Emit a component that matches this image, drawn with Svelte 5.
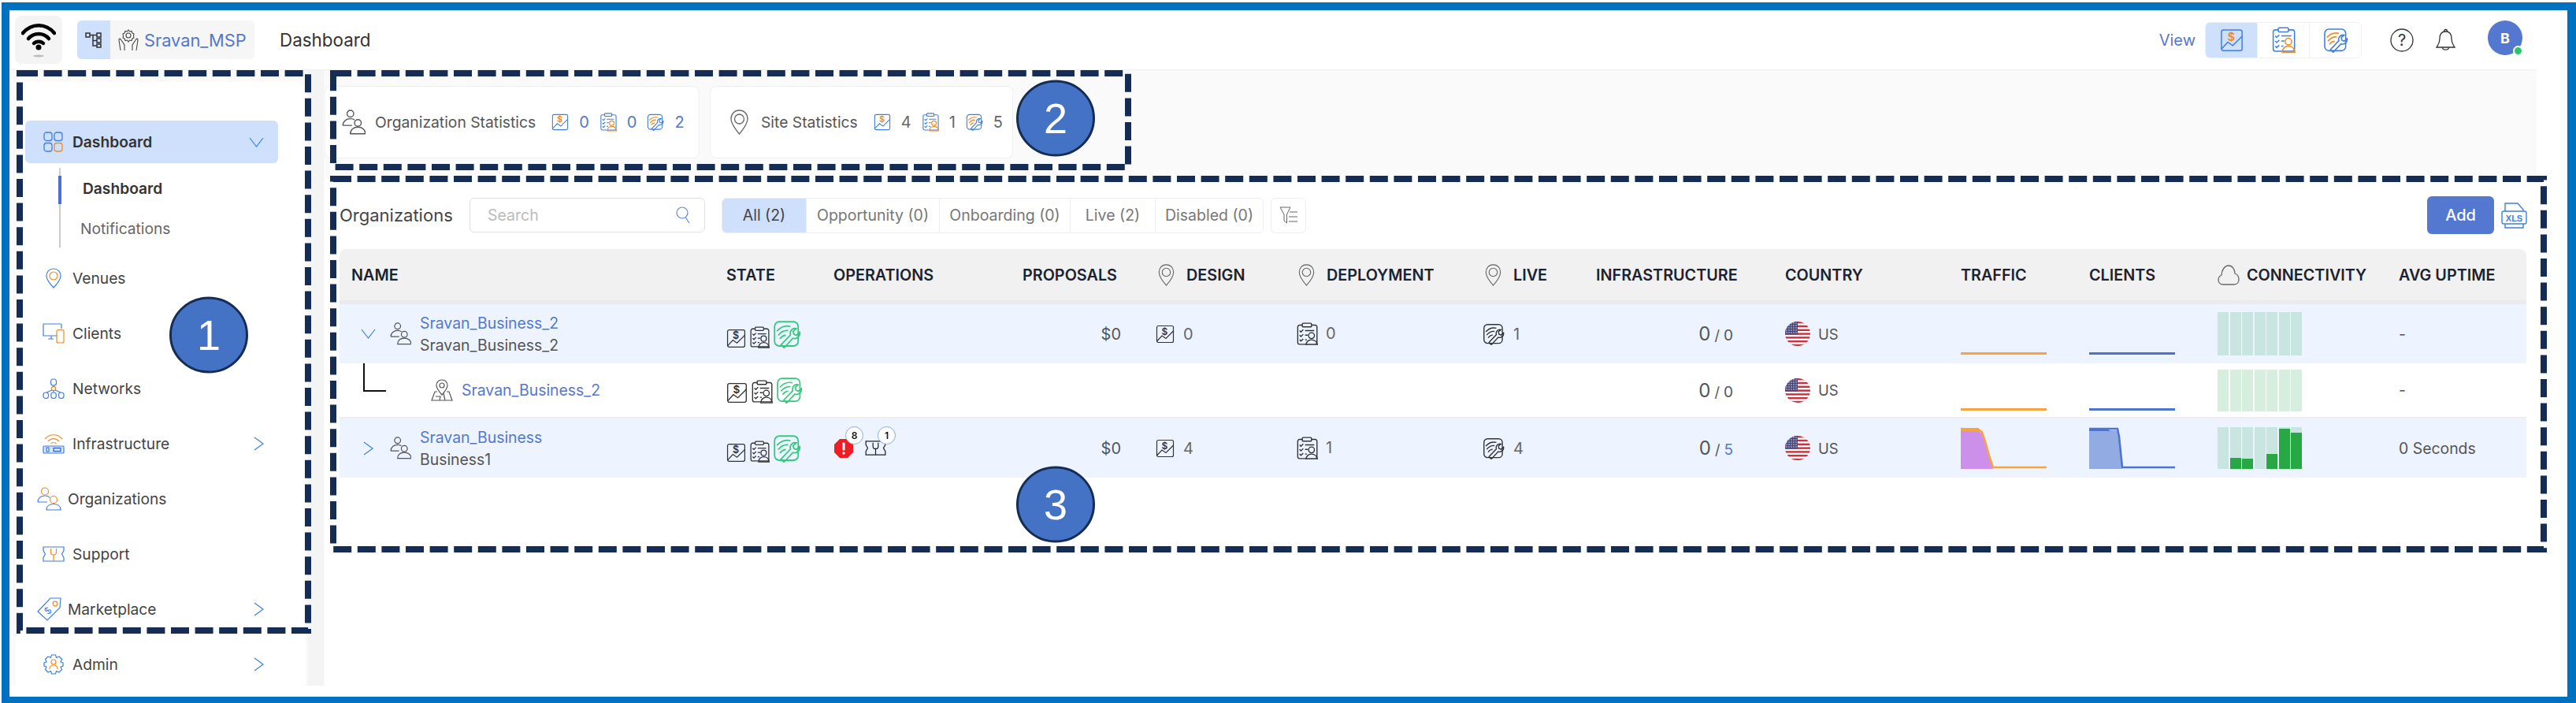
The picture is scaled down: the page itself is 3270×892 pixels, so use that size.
<script lang="ts">
	const menu = [
		{ label: 'Venues', icon: 'venue' },
		{ label: 'Clients', icon: 'clients' },
		{ label: 'Networks', icon: 'networks' },
		{ label: 'Infrastructure', icon: 'infra', more: true },
		{ label: 'Organizations', icon: 'orgs', wide: true },
		{ label: 'Support', icon: 'support' },
		{ label: 'Marketplace', icon: 'tag', more: true, wide: true },
		{ label: 'Admin', icon: 'admin', more: true }
	];

	const tabs = [
		{ label: 'All (2)', w: 107, active: true },
		{ label: 'Opportunity (0)', w: 169 },
		{ label: 'Onboarding (0)', w: 166 },
		{ label: 'Live (2)', w: 108 },
		{ label: 'Disabled (0)', w: 136 }
	];

	const rows = [
		{
			kind: 'org',
			open: true,
			name: 'Sravan_Business_2',
			sub: 'Sravan_Business_2',
			state: [25, 26, 36],
			proposals: '$0',
			design: 0,
			deployment: 0,
			live: 1,
			total: '0',
			blueTotal: false,
			spark: 'flat',
			chartH: 55,
			track: '#c9e5df',
			bars: [0, 0, 0, 0, 0, 0, 0],
			uptime: '-'
		},
		{
			kind: 'site',
			name: 'Sravan_Business_2',
			state: [27, 28, 34],
			total: '0',
			blueTotal: false,
			spark: 'flat',
			chartH: 53,
			track: '#d6eedd',
			bars: [0, 0, 0, 0, 0, 0, 0],
			uptime: '-'
		},
		{
			kind: 'org',
			open: false,
			name: 'Sravan_Business',
			sub: 'Business1',
			state: [25, 26, 36],
			alerts: true,
			proposals: '$0',
			design: 4,
			deployment: 1,
			live: 4,
			total: '5',
			blueTotal: true,
			spark: 'drop',
			chartH: 53,
			track: '#c9e5df',
			bars: [0, 27, 25, 0, 36, 96, 87],
			uptime: '0 Seconds'
		}
	];
</script>

{#snippet money(w, line = '#3f7fe0', accent = '#f28a24')}
	<svg width={w} height={w} viewBox="0 0 24 24" fill="none" stroke={line} stroke-width="1.2">
		<rect x="1.5" y="1.5" width="21" height="21" rx="2" />
		<path d="M1.5 21 L8 14 L13 17.5 L22.5 8" />
		<text x="11.5" y="12.5" font-size="12" font-family="Inter" font-weight="600" text-anchor="middle" fill={accent} stroke="none">$</text>
	</svg>
{/snippet}

{#snippet clip(w, line = '#3f7fe0', accent = '#f28a24')}
	<svg width={w} height={w * 1.06} viewBox="0 0 24 25.5" fill="none" stroke={line} stroke-width="1.2">
		<path d="M7 3 H4 a2 2 0 0 0 -2 2 V22 a2 2 0 0 0 2 2 H21 a2 2 0 0 0 2 -2 V5 a2 2 0 0 0 -2 -2 H17" />
		<rect x="7" y="1" width="10" height="4" rx="1" />
		<path d="M4 9 l1.5 1.5 L8 8 M4 14 l1.5 1.5 L8 13 M4 19 l1.5 1.5 L8 18 M10 9 H20 M10 14 H13 M10 19 H12" />
		<g stroke={accent}>
			<circle cx="17" cy="14.5" r="3.2" />
			<path d="M11 25 c0 -4 3 -6 6 -6 s6 2 6.5 6 Z" />
		</g>
	</svg>
{/snippet}

{#snippet wrench(w, line = '#3f7fe0', accent = '#f28a24')}
	<svg width={w} height={w} viewBox="0 0 24 24" fill="none" stroke={line} stroke-width="1.2">
		<rect x="1.5" y="1.5" width="20" height="20.5" rx="4" />
		<g stroke={accent}>
			<path d="M3.5 9.5 C7 5.5 11 4.5 15 5.5 M4.5 13 C7 10 10 8.5 13 9 M6 16 C7.5 14 9 13 11 13" />
		</g>
		<path fill="none" d="M7 21 L9.5 23.5 L17 15.5 C20 16.5 23.5 14 22.8 10.5 L20 13 L17.8 12 L17.3 9.5 L20 7.2 C16.5 6.3 14 9.5 15 12.5 Z" />
	</svg>
{/snippet}

{#snippet people(w, color = '#555')}
	<svg width={w} height={w * 1.06} viewBox="0 0 28 30" fill="none" stroke={color} stroke-width="1.3">
		<circle cx="10" cy="5" r="4" />
		<path d="M1 19 c0 -5 4 -8 9 -8 c2 0 4 .5 5 1.5 M1 19 H12" />
		<circle cx="19" cy="16" r="4" />
		<path d="M10 29 c0 -5 4 -8 9 -8 s9 3 9 8 Z" />
	</svg>
{/snippet}

{#snippet pin(w, h, color = '#666')}
	<svg width={w} height={h} viewBox="0 0 24 32" fill="none" stroke={color} stroke-width="1.3">
		<path d="M12 1 C5.5 1 1.5 6 1.5 12 C1.5 19 12 31 12 31 C12 31 22.5 19 22.5 12 C22.5 6 18.5 1 12 1 Z" />
		<circle cx="12" cy="12" r="6" />
	</svg>
{/snippet}

{#snippet chevron(open)}
	{#if open}
		<svg width="19" height="13" viewBox="0 0 19 13" fill="none" stroke="#3f7fe0" stroke-width="1.2"><path d="M1 1 L9.5 12 L18 1" /></svg>
	{:else}
		<svg width="13" height="18" viewBox="0 0 13 18" fill="none" stroke="#3f7fe0" stroke-width="1.2"><path d="M1 1 L12 9 L1 17" /></svg>
	{/if}
{/snippet}

{#snippet navIcon(name)}
	{#if name === 'venue'}
		<svg width="20" height="26" viewBox="0 0 20 26" fill="none" stroke="#3f7fe0" stroke-width="1.2">
			<path d="M10 1 C4.5 1 1 5 1 10 C1 15.5 10 25 10 25 C10 25 19 15.5 19 10 C19 5 15.5 1 10 1 Z" />
			<circle cx="10" cy="10" r="5" stroke="#f28a24" />
		</svg>
	{:else if name === 'clients'}
		<svg width="28" height="26" viewBox="0 0 28 26" fill="none" stroke="#3f7fe0" stroke-width="1.2">
			<path d="M19 16 H1 V2 a1 1 0 0 1 1 -1 H23 a1 1 0 0 1 1 1 V7 M11 16 V20 M7 20 H14" />
			<rect x="18" y="8.5" width="9" height="16.5" rx="2" stroke="#f28a24" />
		</svg>
	{:else if name === 'networks'}
		<svg width="28" height="26" viewBox="0 0 28 26" fill="none" stroke="#3f7fe0" stroke-width="1.2">
			<rect x="10.5" y="1" width="7" height="8" rx="3" />
			<circle cx="14" cy="13" r="2.6" stroke="#f28a24" />
			<path d="M14 9 V10.5 M12 15 L5 18 M16 15 L23 18 M14 15.6 V18" />
			<rect x="1" y="18" width="6.5" height="7.5" rx="3" />
			<rect x="10.8" y="18" width="6.5" height="7.5" rx="3" />
			<rect x="20.5" y="18" width="6.5" height="7.5" rx="3" />
		</svg>
	{:else if name === 'infra'}
		<svg width="28" height="26" viewBox="0 0 28 26" fill="none" stroke="#f28a24" stroke-width="1.2">
			<path d="M3 7 C9 0 19 0 25 7 M7 10 C11 5.5 17 5.5 21 10 M10.5 13 C12.5 11 15.5 11 17.5 13" />
			<rect x="1" y="16" width="26" height="9" rx="1" stroke="#3f7fe0" fill="#d8e6fb" />
			<rect x="5" y="18" width="3" height="5" stroke="#3f7fe0" />
			<rect x="14" y="18.5" width="9" height="4" stroke="#2f5fc0" />
		</svg>
	{:else if name === 'orgs'}
		<svg width="31" height="30" viewBox="0 0 31 30" fill="none" stroke="#3f7fe0" stroke-width="1.2">
			<circle cx="10" cy="5.5" r="4.5" stroke="#f28a24" />
			<path d="M1 19 c0 -5 4 -8 9 -8 c3 0 5 1 6 2.5 M1 19 H13" />
			<circle cx="21" cy="16" r="4.5" stroke="#f28a24" />
			<path d="M12 29 c0 -5 4 -7.5 9 -7.5 s9 2.5 9 7.5 Z" />
		</svg>
	{:else if name === 'support'}
		<svg width="28" height="20" viewBox="0 0 28 20" fill="none" stroke="#3f7fe0" stroke-width="1.2">
			<path d="M1 1 H27 V5.5 L24.5 10 L27 14.5 V19 H1 V14.5 L3.5 10 L1 5.5 Z" />
			<path d="M10.5 3 V7.5 C10.5 10 12 11 14 11 S17.5 10 17.5 7.5 V3 M14 11 V19" stroke="#f28a24" />
		</svg>
	{:else if name === 'tag'}
		<svg width="31" height="30" viewBox="0 0 31 30" fill="none" stroke="#3f7fe0" stroke-width="1.2">
			<path d="M1 18 L17 1 L30 1 L29 13 L13 29 Z" />
			<circle cx="23" cy="8" r="2.8" stroke="#f28a24" />
			<text x="14" y="21" font-size="12" font-family="Inter" text-anchor="middle" fill="#3f7fe0" stroke="none" transform="rotate(-45 14 17)">$</text>
		</svg>
	{:else if name === 'admin'}
		<svg width="26" height="26" viewBox="0 0 26 26" fill="none" stroke="#3f7fe0" stroke-width="1.2">
			<path d="M10.5 1 H15.5 L16.5 4.5 L20 3 L23.5 6.5 L22 10 L25 11 V15 L22 16 L23.5 19.5 L20 23 L16.5 21.5 L15.5 25 H10.5 L9.5 21.5 L6 23 L2.5 19.5 L4 16 L1 15 V11 L4 10 L2.5 6.5 L6 3 L9.5 4.5 Z" />
			<g stroke="#f28a24">
				<circle cx="13" cy="10" r="3" />
				<path d="M8 19 c0 -3 2 -5 5 -5 s5 2 5 5" />
			</g>
		</svg>
	{/if}
{/snippet}

{#snippet flag()}
	<svg class="flag" width="32" height="31" viewBox="0 0 32 31">
		<rect width="32" height="31" fill="#fff" />
		{#each [0, 2, 4, 6, 8, 10, 12] as s}
			<rect y={s * 2.4} width="32" height="2.4" fill="#c8313e" />
		{/each}
		<rect width="16" height="16.5" fill="#46467f" />
		{#each [2, 5, 8, 11, 14] as y}
			{#each [2, 5, 8, 11, 14] as x}
				<circle cx={x} cy={y} r="0.7" fill="#fff" />
			{/each}
		{/each}
	</svg>
{/snippet}

{#snippet spark(kind, h, line, area, points, fillPoints)}
	<svg class="spark" width="109" height={h} viewBox="0 0 109 {h}">
		{#if kind === 'flat'}
			<rect y={h - 4} width="109" height="3" fill={line} />
		{:else}
			<polygon points={fillPoints} fill={area} />
			<polyline points={points} fill="none" stroke={line} stroke-width="2.5" />
			<path d="M0 1 H22 L28 6 L26 5 H0 Z" fill={line} />
		{/if}
	</svg>
{/snippet}

<div class="frame">
	<header class="topbar">
		<div class="logo">
			<svg width="44" height="46" viewBox="0 0 44 46" fill="none" stroke="#000" stroke-width="4.5" stroke-linecap="round">
				<path d="M2 14 C13 1 31 1 42 14" />
				<path d="M9 21 C16 13 28 13 35 21" />
				<path d="M16 27 C19 24 25 24 28 27" />
				<circle cx="22" cy="32" r="3.5" fill="#000" stroke="none" />
				<ellipse cx="22" cy="43" rx="7" ry="1.5" fill="#bbb" stroke="none" />
			</svg>
		</div>
		<div class="tenant">
			<div class="tenant-tree">
				<svg width="22" height="20" viewBox="0 0 22 20" fill="none" stroke="#333" stroke-width="1.5">
					<rect x="1" y="1" width="5" height="5" />
					<rect x="15" y="1" width="5" height="5" />
					<rect x="15" y="8" width="5" height="5" />
					<rect x="15" y="15" width="5" height="4" />
					<path d="M6 3.5 H15 M10 3.5 V17 H15 M10 10.5 H15" />
				</svg>
			</div>
			<svg class="hands" width="28" height="28" viewBox="0 0 28 28" fill="none" stroke="#444" stroke-width="1.1">
				<circle cx="14" cy="8" r="3" />
				<path d="M14 1 l1.5 2 l2.5 -.5 l1 2.5 l2 1 l-.5 2.5 l.5 2.5 l-2 1 l-1 2.5 l-2.5 -.5 l-1.5 2 l-1.5 -2 l-2.5 .5 l-1 -2.5 l-2 -1 l.5 -2.5 l-.5 -2.5 l2 -1 l1 -2.5 l2.5 .5 Z" />
				<path d="M4 27 L2 14 C2 11 4 12 5 14 L9 20 V27 M24 27 L26 14 C26 11 24 12 23 14 L19 20 V27" />
			</svg>
			<span class="tenant-name">Sravan_MSP</span>
		</div>
		<h1 class="title">Dashboard</h1>
		<div class="top-right">
			<span class="view">View</span>
			<div class="seg">
				<div class="seg-item on">{@render money(30)}</div>
				<div class="seg-item">{@render clip(31)}</div>
				<div class="seg-item last">{@render wrench(32)}</div>
			</div>
			<svg class="help" width="30" height="30" viewBox="0 0 30 30" fill="none" stroke="#333" stroke-width="1.3">
				<circle cx="15" cy="15" r="14" />
				<text x="15" y="22" font-size="20" font-family="Inter" text-anchor="middle" fill="#333" stroke="none">?</text>
			</svg>
			<svg class="bell" width="25" height="30" viewBox="0 0 25 30" fill="none" stroke="#333" stroke-width="1.3">
				<path d="M12.5 4 C7 4 5 8 5 13 C5 19 3 21 1 24 H24 C22 21 20 19 20 13 C20 8 18 4 12.5 4 Z" />
				<path d="M10.5 4 a2 2.5 0 0 1 4 0 M8.5 24.5 C9 28 16 28 16.5 24.5" />
			</svg>
			<div class="avatar">B<span class="online"></span></div>
		</div>
	</header>

	<div class="content">
		<aside class="side">
			<nav class="side-card">
				<div class="nav-item active">
					<span class="nav-icon">
						<svg width="25" height="26" viewBox="0 0 25 26" fill="none" stroke="#3f7fe0" stroke-width="1.3">
							<rect x="1" y="1" width="10" height="10.5" rx="3" />
							<rect x="14" y="1" width="10" height="10.5" rx="3" />
							<rect x="1" y="14.5" width="10" height="10.5" rx="3" />
							<rect x="14" y="14.5" width="10" height="10.5" rx="3" stroke="#f28a24" />
						</svg>
					</span>
					<span class="nav-label strong">Dashboard</span>
					<span class="nav-more">{@render chevron(true)}</span>
				</div>
				<div class="sub">
					<div class="sub-item current">Dashboard</div>
					<div class="sub-item">Notifications</div>
				</div>
				{#each menu as item}
					<div class="nav-item">
						<span class="nav-icon" class:wide={item.wide}>{@render navIcon(item.icon)}</span>
						<span class="nav-label">{item.label}</span>
						{#if item.more}
							<span class="nav-more">{@render chevron(false)}</span>
						{/if}
					</div>
				{/each}
			</nav>
		</aside>

		<main class="main">
			<section class="stats">
				<div class="stat-card org">
					{@render people(30, '#555')}
					<span class="stat-title">Organization Statistics</span>
					<div class="stat-nums">
						{@render money(22)}<b class="blue">0</b>
						{@render clip(22)}<b class="blue">0</b>
						{@render wrench(22)}<b class="blue">2</b>
					</div>
				</div>
				<div class="stat-card site">
					{@render pin(25, 32)}
					<span class="stat-title">Site Statistics</span>
					<div class="stat-nums">
						{@render money(22)}<b>4</b>
						{@render clip(22)}<b>1</b>
						{@render wrench(22)}<b>5</b>
					</div>
				</div>
			</section>

			<section class="panel">
				<div class="toolbar">
					<span class="panel-title">Organizations</span>
					<div class="search">
						<input placeholder="Search" />
						<svg width="18" height="22" viewBox="0 0 18 22" fill="none" stroke="#5d86e0" stroke-width="1.2">
							<circle cx="8" cy="8" r="7" />
							<path d="M12.5 14 L17 21" />
						</svg>
					</div>
					<div class="tabs">
						{#each tabs as tab}
							<div class="tab" class:active={tab.active} style="width:{tab.w}px">{tab.label}</div>
						{/each}
					</div>
					<div class="filter">
						<svg width="24" height="24" viewBox="0 0 24 24" fill="none" stroke="#666" stroke-width="1">
							<path d="M1 2 H14 L9.5 11 V22 L6 19 V11 Z M13 8 H23 M12 14 H23 M12 20 H23" />
						</svg>
					</div>
					<button class="add">Add</button>
					<svg class="xls" width="33" height="34" viewBox="0 0 33 34" fill="none" stroke="#3f7fe0" stroke-width="1.4">
						<path d="M5 12 V2 H21 L28 10 V12 M5 28 V33 H28 V28" />
						<rect x="1" y="12" width="31" height="16" rx="2" />
						<text x="16.5" y="24.5" font-size="11" font-weight="700" font-family="Liberation Sans" text-anchor="middle" fill="#3f7fe0" stroke="none">XLS</text>
					</svg>
				</div>

				<div class="table">
					<div class="grid head">
						<div class="name-head">NAME</div>
						<div>STATE</div>
						<div>OPERATIONS</div>
						<div>PROPOSALS</div>
						<div class="pinned">{@render pin(21, 28)}DESIGN</div>
						<div class="pinned">{@render pin(21, 28)}DEPLOYMENT</div>
						<div class="pinned">{@render pin(21, 28)}LIVE</div>
						<div>INFRASTRUCTURE</div>
						<div>COUNTRY</div>
						<div>TRAFFIC</div>
						<div>CLIENTS</div>
						<div class="cloud-head">
							<svg width="28" height="28" viewBox="0 0 28 28" fill="none" stroke="#666" stroke-width="1.3">
								<path d="M7 26 C2 26 1 22 1 20 C1 17 3 15 5 14 C5 8 9 2 14 2 C19 2 22 7 22 12 C25 13 27 16 27 20 C27 23 25 26 21 26 Z" />
							</svg>
							CONNECTIVITY
						</div>
						<div>AVG UPTIME</div>
					</div>

					{#each rows as row}
						<div class="grid row" class:tint={row.kind === 'org'} class:site-row={row.kind === 'site'}>
							<div class="name-cell">
								{#if row.kind === 'org'}
									<span class="expander">{@render chevron(row.open)}</span>
									{@render people(27, '#555')}
									<div class="names">
										<span class="link">{row.name}</span>
										<span>{row.sub}</span>
									</div>
								{:else}
									<span class="tree"></span>
									<svg class="site-pin" width="28" height="28" viewBox="0 0 28 28" fill="none" stroke="#555" stroke-width="1.2">
										<path d="M14 1 C9.5 1 7 4.5 7 8 C7 12 14 20 14 20 C14 20 21 12 21 8 C21 4.5 18.5 1 14 1 Z" />
										<circle cx="14" cy="8" r="3" />
										<path d="M8 16 H5 L1 27 H27 L23 16 H20 M6 22 H12 L11 27 M18 27 L16 18" />
									</svg>
									<span class="link">{row.name}</span>
								{/if}
							</div>

							<div class="state-cell">
								{@render money(row.state[0], '#333', '#333')}
								{@render clip(row.state[1], '#333', '#333')}
								{@render wrench(row.state[2], '#35c97e', '#35c97e')}
							</div>

							<div class="ops-cell">
								{#if row.alerts}
									<span class="alert">
										<svg width="24" height="24" viewBox="0 0 24 24">
											<polygon points="7,0 17,0 24,7 24,17 17,24 7,24 0,17 0,7" fill="#ee1c25" />
											<rect x="10.5" y="4.5" width="3" height="10" rx="1" fill="#fff" />
											<rect x="10.5" y="16.5" width="3" height="3" rx="1" fill="#fff" />
										</svg>
										<span class="count">8</span>
									</span>
									<span class="ticket">
										<svg width="27" height="19" viewBox="0 0 28 20" fill="none" stroke="#222" stroke-width="1.3">
											<path d="M1 1 H27 V5.5 L24.5 10 L27 14.5 V19 H1 V14.5 L3.5 10 L1 5.5 Z" />
											<path d="M10.5 3 V7.5 C10.5 10 12 11 14 11 S17.5 10 17.5 7.5 V3 M14 11 V19" />
										</svg>
										<span class="count">1</span>
									</span>
								{/if}
							</div>

							<div class="money-cell">{row.proposals ?? ''}</div>

							<div class="count-cell design">
								{#if row.kind === 'org'}{@render money(24, '#333', '#333')}<span>{row.design}</span>{/if}
							</div>
							<div class="count-cell deployment">
								{#if row.kind === 'org'}{@render clip(28, '#333', '#333')}<span>{row.deployment}</span>{/if}
							</div>
							<div class="count-cell live">
								{#if row.kind === 'org'}{@render wrench(28, '#333', '#333')}<span>{row.live}</span>{/if}
							</div>

							<div class="infra-cell">
								<span class="big">0</span><span class="slash">/</span><span class:blue={row.blueTotal}>{row.total}</span>
							</div>

							<div class="country-cell">{@render flag()}<span>US</span></div>

							<div>
								{@render spark(row.spark, row.chartH, '#f9a33e', '#cd90ea', '0,2 22,3 27,6 31,18 36,36 41,51 109,51', '0,4 22,4 27,8 31,20 36,38 41,53 0,53')}
							</div>
							<div>
								{@render spark(row.spark, row.chartH, '#4d73d1', '#92abe2', '0,2 36,2 38,12 42,51 109,51', '0,4 36,4 38,12 42,53 0,53')}
							</div>

							<div class="bars" style="height:{row.chartH}px">
								{#each row.bars as bar}
									<div class="bar" style="background:{row.track}">
										<div class="bar-fill" style="height:{bar}%"></div>
									</div>
								{/each}
							</div>

							<div class="uptime">{row.uptime}</div>
						</div>
					{/each}
				</div>
			</section>
		</main>
	</div>

	<svg class="notes" width="3270" height="892" viewBox="0 0 3270 892" fill="none">
		<g stroke="#152c55" stroke-width="8" stroke-dasharray="23 7.6">
			<rect x="25" y="93" width="366" height="707" />
			<rect x="423" y="93" width="1009" height="119" />
			<rect x="423" y="227" width="2806" height="470" />
		</g>
		<g fill="#4472c4" stroke="#152c55" stroke-width="3">
			<ellipse cx="265" cy="425" rx="48.5" ry="47" />
			<ellipse cx="1340" cy="150" rx="48.5" ry="47" />
			<ellipse cx="1340" cy="640" rx="48.5" ry="47" />
		</g>
		<g fill="#fff" font-family="Liberation Sans" font-size="54" text-anchor="middle">
			<text x="265" y="444">1</text>
			<text x="1340" y="169">2</text>
			<text x="1340" y="659">3</text>
		</g>
	</svg>
</div>

<style>
	:global(body) {
		margin: 0;
		background: #fff;
	}
	.frame {
		position: relative;
		box-sizing: border-box;
		width: 3268px;
		height: 889px;
		margin: 3px 0 0 2px;
		border: solid #0070c0;
		border-width: 10px 11px 8px 10px;
		font-family: Inter, 'Liberation Sans', sans-serif;
		color: #444;
		background: #fff;
	}
	.notes {
		position: absolute;
		top: -13px;
		left: -12px;
	}

	.topbar {
		display: flex;
		align-items: center;
		height: 75px;
		padding: 0 57px 0 7px;
		box-sizing: border-box;
		width: 3247px;
	}
	.logo {
		display: flex;
		align-items: center;
		justify-content: center;
		width: 60px;
		height: 61px;
		background: #f4f4f4;
		border-radius: 8px;
	}
	.tenant {
		display: flex;
		align-items: center;
		width: 225px;
		height: 49px;
		margin-left: 19px;
		background: #f6f6f6;
		border-radius: 6px;
		overflow: hidden;
	}
	.tenant-tree {
		display: flex;
		align-items: center;
		justify-content: center;
		width: 42px;
		height: 100%;
		background: #cfe0fd;
	}
	.hands {
		margin-left: 9px;
	}
	.tenant-name {
		margin-left: 6px;
		font-size: 21.8px;
		color: #5478d0;
	}
	.title {
		margin: 0 0 0 32px;
		font-size: 22.4px;
		font-weight: 400;
		color: #333;
	}
	.top-right {
		display: flex;
		align-items: center;
		margin-left: auto;
	}
	.view {
		font-size: 20px;
		color: #5478d0;
		margin-right: 12px;
	}
	.seg {
		display: flex;
		height: 46px;
		border: 1px solid #f0f0f0;
		border-radius: 6px;
		overflow: hidden;
		box-sizing: border-box;
	}
	.seg-item {
		display: flex;
		align-items: center;
		justify-content: center;
		width: 65px;
		border-right: 1px solid #f0f0f0;
	}
	.seg-item.on {
		background: #cfe0fd;
	}
	.seg-item.last {
		border-right: none;
	}
	.help {
		margin-left: 36px;
	}
	.bell {
		margin-left: 28px;
	}
	.avatar {
		position: relative;
		display: flex;
		align-items: center;
		justify-content: center;
		width: 44px;
		height: 44px;
		margin: -5px 0 0 41px;
		border-radius: 50%;
		background: #5478d0;
		color: #fff;
		font-size: 18px;
		font-weight: 700;
	}
	.online {
		position: absolute;
		right: -1px;
		bottom: -1px;
		width: 9px;
		height: 9px;
		border: 2px solid #fff;
		border-radius: 50%;
		background: #2bc46c;
	}

	.content {
		display: flex;
		height: 782px;
	}
	.side {
		box-sizing: border-box;
		width: 399px;
		padding: 15px 23px 0 8px;
		background: linear-gradient(to right, #fafafa 379px, #f4f4f4 379px);
		border-top: 1px solid #efefef;
	}
	.side-card {
		height: 100%;
		padding-top: 49px;
		box-sizing: border-box;
		background: #fff;
		border-radius: 14px 14px 0 0;
	}
	.nav-item {
		display: flex;
		align-items: center;
		box-sizing: border-box;
		width: 321px;
		height: 70px;
		margin-left: 12px;
		padding: 0 18px 0 15px;
		font-size: 19.2px;
		color: #444;
	}
	.nav-item.active {
		height: 54px;
		background: #cfe0fd;
		border-radius: 6px;
		margin-bottom: 6px;
	}
	.nav-icon {
		display: flex;
		justify-content: center;
		flex: none;
		width: 41px;
		margin-right: 4px;
	}
	.nav-icon.wide {
		justify-content: flex-start;
		width: 39px;
		margin-right: 0;
	}
	.strong {
		font-weight: 600;
		color: #333;
	}
	.nav-more {
		display: flex;
		margin-left: auto;
	}
	.sub {
		position: relative;
		height: 101px;
		margin: 0 0 4px 55px;
		border-left: 2px solid #ccc;
	}
	.sub-item {
		display: flex;
		align-items: center;
		height: 51px;
		padding-left: 25px;
		font-size: 19.2px;
		color: #666;
	}
	.sub-item.current {
		padding-left: 28px;
		font-weight: 600;
		color: #333;
	}
	.sub-item.current::before {
		content: '';
		position: absolute;
		left: -3px;
		top: 10px;
		width: 4px;
		height: 36px;
		background: #4d6fd0;
	}

	.main {
		display: flex;
		flex-direction: column;
		width: 2809px;
		border-top: 1px solid #efefef;
		background: #fafafa;
	}
	.stats {
		display: flex;
		gap: 13px;
		height: 133px;
		padding: 20px 0 0 1px;
		box-sizing: border-box;
	}
	.stat-card {
		display: flex;
		align-items: center;
		box-sizing: border-box;
		height: 92px;
		background: #fff;
		border: 1px solid #f0f0f0;
		border-radius: 8px;
		font-size: 19.3px;
		color: #555;
	}
	.stat-card.org {
		width: 476px;
		padding-left: 21px;
		gap: 12px;
	}
	.stat-card.site {
		width: 385px;
		padding-left: 24px;
		gap: 15px;
	}
	.stat-nums {
		display: flex;
		align-items: center;
		gap: 13px;
		margin-left: 8px;
	}
	.stat-card.site .stat-nums {
		margin-left: 5px;
	}
	.stat-nums b {
		font-size: 20px;
		font-weight: 400;
		color: #666;
	}
	.stat-nums b.blue,
	.blue {
		color: #5478d0;
	}

	.panel {
		flex: 1;
		box-sizing: border-box;
		margin-left: 1px;
		padding: 28px 13px 0 19px;
		background: #fff;
		border-radius: 12px 0 0 0;
	}
	.toolbar {
		display: flex;
		align-items: center;
		height: 46px;
	}
	.panel-title {
		width: 165px;
		font-size: 22px;
		color: #444;
	}
	.search {
		display: flex;
		align-items: center;
		box-sizing: border-box;
		width: 299px;
		height: 44px;
		padding: 0 18px 0 20px;
		border: 1px solid #dfe1e6;
		border-radius: 6px;
	}
	.search input {
		flex: 1;
		min-width: 0;
		border: none;
		outline: none;
		background: transparent;
		font: 19.5px Inter, 'Liberation Sans', sans-serif;
	}
	.search input::placeholder {
		color: #bbb;
	}
	.tabs {
		display: flex;
		height: 45px;
		margin-left: 21px;
		border: 1px solid #eee;
		border-radius: 6px;
		overflow: hidden;
		box-sizing: border-box;
	}
	.tab {
		display: flex;
		align-items: center;
		justify-content: center;
		box-sizing: border-box;
		border-right: 1px solid #eee;
		font-size: 19.5px;
		color: #777;
	}
	.tab:last-child {
		border-right: none;
	}
	.tab.active {
		background: #cfe0fd;
		color: #444;
	}
	.filter {
		display: flex;
		align-items: center;
		justify-content: center;
		width: 45px;
		height: 45px;
		margin-left: 9px;
		border: 1px solid #eee;
		border-radius: 6px;
		box-sizing: border-box;
	}
	.add {
		width: 85px;
		height: 48px;
		margin-left: auto;
		border: none;
		border-radius: 6px;
		background: #5478d0;
		color: #fff;
		font: 500 20px Inter, 'Liberation Sans', sans-serif;
	}
	.xls {
		margin: 0 -1px 0 9px;
	}

	.table {
		margin-top: 20px;
	}
	.grid {
		display: grid;
		grid-template-columns: 491px 136px 240px 169px 178px 237px 144px 240px 223px 163px 163px 230px 1fr;
		align-items: center;
	}
	.head {
		height: 70px;
		box-sizing: border-box;
		border-bottom: 5px solid #ebebef;
		border-radius: 8px 8px 0 0;
		background: #f1f1f1;
		font-size: 19.8px;
		font-weight: 600;
		color: #1c2230;
	}
	.name-head {
		padding-left: 15px;
	}
	.pinned {
		display: flex;
		align-items: center;
		gap: 15px;
		padding-left: 3px;
	}
	.cloud-head {
		display: flex;
		align-items: center;
		gap: 9px;
	}
	.row {
		height: 75px;
		font-size: 19.4px;
		color: #555;
	}
	.row.tint {
		background: #edf4ff;
	}
	.row.site-row {
		box-sizing: border-box;
		height: 70px;
		border-bottom: 2px solid #eee;
	}
	.name-cell {
		display: flex;
		align-items: center;
		align-self: stretch;
	}
	.expander {
		display: flex;
		justify-content: center;
		width: 37px;
		margin: 0 9px 0 18px;
	}
	.names {
		display: flex;
		flex-direction: column;
		margin-left: 11px;
		line-height: 28px;
	}
	.link {
		color: #5478d0;
	}
	.tree {
		align-self: flex-start;
		width: 27px;
		height: 34px;
		margin-left: 30px;
		border-left: 2px solid #111;
		border-bottom: 2px solid #111;
	}
	.site-pin {
		margin: 0 11px 0 57px;
	}
	.state-cell {
		display: flex;
		align-items: flex-end;
		gap: 4px;
	}
	.ops-cell {
		display: flex;
		align-items: center;
		gap: 15px;
		padding-left: 1px;
	}
	.alert,
	.ticket {
		position: relative;
		display: flex;
	}
	.count {
		position: absolute;
		display: flex;
		align-items: center;
		justify-content: center;
		box-sizing: border-box;
		width: 23px;
		height: 23px;
		left: 14px;
		top: -16px;
		border: 1px solid #8fa8e4;
		border-radius: 50%;
		background: #fff;
		color: #111;
		font-size: 12px;
		font-weight: 600;
	}
	.ticket .count {
		left: 16px;
		top: -18px;
	}
	.money-cell {
		padding-right: 44px;
		text-align: right;
		font-size: 20px;
	}
	.count-cell {
		display: flex;
		align-items: center;
		font-size: 20px;
		color: #666;
	}
	.count-cell.design {
		gap: 11px;
	}
	.count-cell.deployment {
		gap: 10px;
	}
	.count-cell.live {
		gap: 11px;
	}
	.infra-cell {
		padding-right: 66px;
		display: flex;
		align-items: baseline;
		justify-content: flex-end;
		gap: 5px;
		font-size: 19px;
	}
	.big {
		font-size: 24px;
	}
	.slash {
		font-size: 18px;
	}
	.country-cell {
		display: flex;
		align-items: center;
		gap: 10px;
		font-size: 18.5px;
	}
	.flag {
		border-radius: 50%;
	}
	.spark {
		display: block;
	}
	.bars {
		display: flex;
		gap: 1.5px;
		width: 107px;
	}
	.bar {
		display: flex;
		flex: 1;
		align-items: flex-end;
	}
	.bar-fill {
		width: 100%;
		background: #27a844;
	}
	.uptime {
		font-size: 19.4px;
	}
</style>
